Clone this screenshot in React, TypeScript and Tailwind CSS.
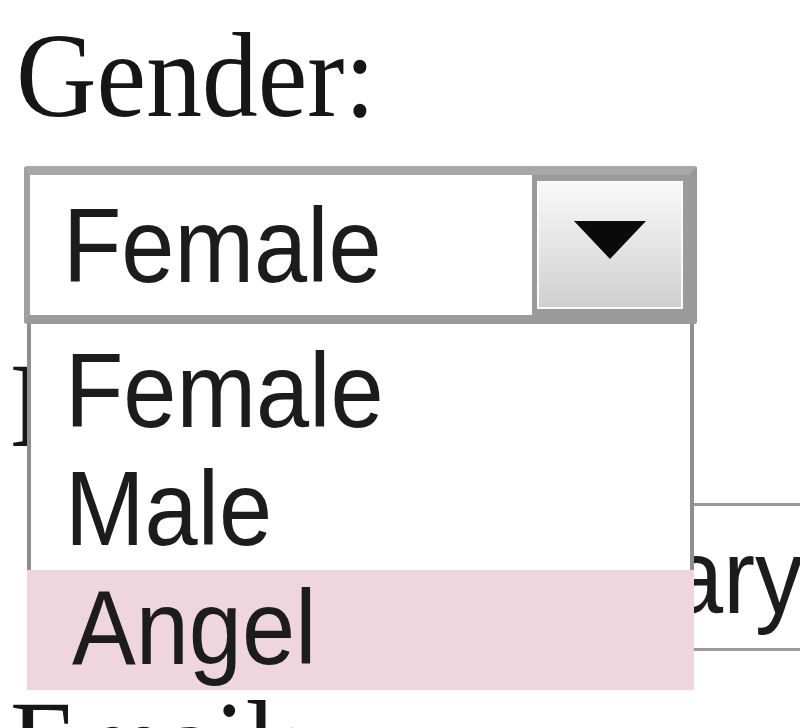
import React from "react";

const sans = { fontFamily: '"Liberation Sans", Arial, sans-serif' };
const serif = { fontFamily: '"Liberation Serif", "Times New Roman", serif' };

function SansText({ children }: { children: React.ReactNode }) {
  return (
    <span
      className="inline-block origin-left scale-x-[0.91] whitespace-nowrap text-[105px] leading-[118px] text-[#1c1c1c]"
      style={sans}
    >
      {children}
    </span>
  );
}

function SerifLabel({ children }: { children: React.ReactNode }) {
  return (
    <span
      className="inline-block origin-left scale-x-[0.93] whitespace-nowrap text-[120px] leading-[120px] text-[#161616]"
      style={serif}
    >
      {children}
    </span>
  );
}

export default function App() {
  return (
    <div className="relative h-[728px] w-[800px] overflow-hidden bg-white">
      {/* Gender label */}
      <div className="pl-[16px] pt-[16px] h-[134px]">
        <SerifLabel>Gender:</SerifLabel>
      </div>

      {/* Select */}
      <div className="relative z-10 ml-[24px] mt-[32px] h-[158px] w-[673px]">
        <div className="flex h-full w-full rounded-[3px] border-t-[9px] border-l-[6px] border-r-[8px] border-b-[9px] border-t-[#a8a8a8] border-l-[#a0a0a0] border-r-[#9a9a9a] border-b-[#9a9a9a] bg-white">
          <div className="flex-1 pl-[33px] pt-[12px]">
            <SansText>Female</SansText>
          </div>
          <div className="h-full w-[157px] border-t-[6px] border-b-[6px] border-l-[5px] border-r-[6px] border-[#9b9b9b]">
            <div className="flex h-full w-full items-start justify-center border-2 border-[#fbfbfb] bg-linear-to-b from-[#f9f9f9] via-[#e4e4e4] to-[#cfcfcf] pt-[38px]">
              <svg width="72" height="38" viewBox="0 0 72 38">
                <polygon points="0,0 72,0 36,38" fill="#0a0a0a" />
              </svg>
            </div>
          </div>
        </div>

        {/* Open dropdown list */}
        <div className="absolute left-[3px] top-full w-[667px] border-l-[4px] border-r-[4px] border-[#8f8f8f] bg-white pt-[8px]">
          <div className="h-[118px] pl-[34px]">
            <SansText>Female</SansText>
          </div>
          <div className="h-[120px] pl-[34px]">
            <SansText>Male</SansText>
          </div>
          <div className="-mx-[4px] h-[120px] bg-[#efd5de] pl-[45px]">
            <span
              className="inline-block origin-left scale-x-[0.91] whitespace-nowrap text-[105px] leading-[115px] text-[#1c1c1c]"
              style={sans}
            >
              Angel
            </span>
          </div>
        </div>
      </div>

      {/* Content hidden behind the open list */}
      <div className="mt-[22px] h-[120px] pl-[10px]">
        <SerifLabel>D</SerifLabel>
      </div>

      <div className="ml-[500px] mt-[37px] h-[148px] w-[330px] border-t-[3px] border-b-[3px] border-[#9a9a9a] pl-[32px] pt-[12px]">
        <SansText>Salary</SansText>
      </div>

      <div className="mt-[33px] pl-[10px]">
        <SerifLabel>Email:</SerifLabel>
      </div>
    </div>
  );
}
